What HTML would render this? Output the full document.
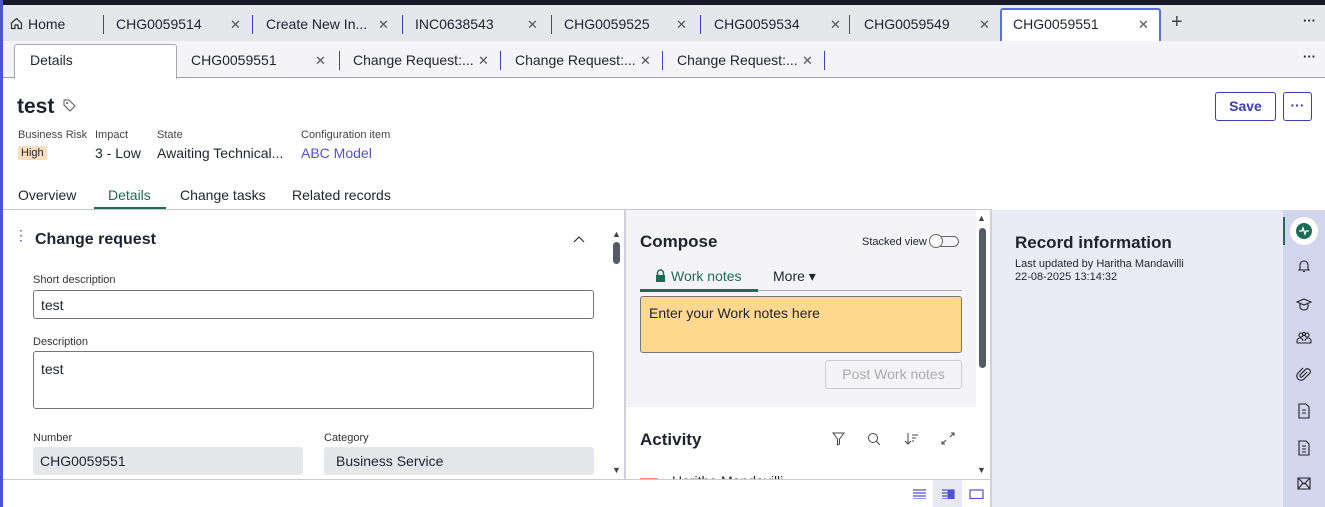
<!DOCTYPE html>
<html><head><meta charset="utf-8"><style>
*{box-sizing:border-box;margin:0;padding:0}
body{width:1325px;height:507px;overflow:hidden;background:#fff;font-family:"Liberation Sans",sans-serif;color:#1f2330;position:relative;font-size:14px}
.a{position:absolute;white-space:nowrap}
.x{color:#555;font-size:13px}
.sep{position:absolute;width:1px;background:#3a44b8}
svg{position:absolute}
</style></head><body>
<div class="a" style="left:0;top:0;width:1325px;height:5px;background:#181a26"></div>
<div class="a" style="left:0;top:0;width:3px;height:507px;background:#4d55c8"></div>
<!-- tab bar 1 -->
<div class="a" style="left:3px;top:5px;width:1322px;height:36px;background:#e6e7eb"></div>
<svg style="left:10px;top:17px" width="13" height="13" viewBox="0 0 13 13"><path d="M1.5 6 L6.5 1.5 L11.5 6 V11.5 H8 V8 H5 V11.5 H1.5 Z" fill="none" stroke="#333" stroke-width="1.2"/></svg>
<div class="a" style="left:28px;top:16px">Home</div>
<div class="sep" style="left:103px;top:15px;height:19px"></div>
<div class="a" style="left:116px;top:16px">CHG0059514</div><div class="a x" style="left:230px;top:17px">✕</div>
<div class="sep" style="left:252px;top:15px;height:19px"></div>
<div class="a" style="left:266px;top:16px">Create New In...</div><div class="a x" style="left:378px;top:17px">✕</div>
<div class="sep" style="left:402px;top:15px;height:19px"></div>
<div class="a" style="left:415px;top:16px">INC0638543</div><div class="a x" style="left:527px;top:17px">✕</div>
<div class="sep" style="left:551px;top:15px;height:19px"></div>
<div class="a" style="left:564px;top:16px">CHG0059525</div><div class="a x" style="left:676px;top:17px">✕</div>
<div class="sep" style="left:700px;top:15px;height:19px"></div>
<div class="a" style="left:714px;top:16px">CHG0059534</div><div class="a x" style="left:830px;top:17px">✕</div>
<div class="sep" style="left:849px;top:15px;height:19px"></div>
<div class="a" style="left:864px;top:16px">CHG0059549</div><div class="a x" style="left:979px;top:17px">✕</div>
<div class="a" style="left:1000px;top:8px;width:161px;height:33px;background:#fff;border:2px solid #5a6ee8;border-bottom:none;border-radius:3px 3px 0 0"></div>
<div class="a" style="left:1013px;top:16px">CHG0059551</div><div class="a x" style="left:1138px;top:17px">✕</div>
<div class="a" style="left:1171px;top:11px;font-size:20px;color:#444">+</div>
<div class="a" style="left:1303px;top:13px;font-weight:bold;font-size:13px">···</div>
<!-- tab bar 2 -->
<div class="a" style="left:3px;top:41px;width:1322px;height:37px;background:#f4f4f6;border-bottom:1px solid #9ea0aa"></div>
<div class="a" style="left:14px;top:44px;width:163px;height:35px;background:#fff;border:1px solid #aaa;border-bottom:none;border-radius:3px 3px 0 0"></div>
<div class="a" style="left:30px;top:52px">Details</div>
<div class="a" style="left:191px;top:52px">CHG0059551</div><div class="a x" style="left:315px;top:53px">✕</div>
<div class="sep" style="left:339px;top:51px;height:19px"></div>
<div class="a" style="left:353px;top:52px">Change Request:...</div><div class="a x" style="left:478px;top:53px">✕</div>
<div class="sep" style="left:500px;top:51px;height:19px"></div>
<div class="a" style="left:515px;top:52px">Change Request:...</div><div class="a x" style="left:640px;top:53px">✕</div>
<div class="sep" style="left:662px;top:51px;height:19px"></div>
<div class="a" style="left:677px;top:52px">Change Request:...</div><div class="a x" style="left:802px;top:53px">✕</div>
<div class="sep" style="left:824px;top:51px;height:19px"></div>
<div class="a" style="left:1303px;top:49px;font-weight:bold;font-size:13px">···</div>
<!-- header -->
<div class="a" style="left:17px;top:95px;font-size:21px;font-weight:bold">test</div>
<svg style="left:63px;top:99px" width="13" height="13" viewBox="0 0 13 13"><path d="M1 1 H6 L12 7 L7 12 L1 6 Z" fill="none" stroke="#555" stroke-width="1"/><circle cx="4" cy="4" r="1" fill="#555"/></svg>
<div class="a" style="left:18px;top:129px;font-size:11px;color:#444">Business Risk</div>
<div class="a" style="left:18px;top:146px;font-size:11px;background:#fbdcbc;padding:1px 3px;border-radius:2px">High</div>
<div class="a" style="left:95px;top:129px;font-size:11px;color:#444">Impact</div>
<div class="a" style="left:95px;top:145px">3 - Low</div>
<div class="a" style="left:157px;top:129px;font-size:11px;color:#444">State</div>
<div class="a" style="left:157px;top:145px">Awaiting Technical...</div>
<div class="a" style="left:301px;top:129px;font-size:11px;color:#444">Configuration item</div>
<div class="a" style="left:301px;top:145px;color:#4f52d0">ABC Model</div>
<div class="a" style="left:1215px;top:92px;width:61px;height:29px;border:1px solid #3b3fb0;border-radius:3px;color:#3b3fb0;font-weight:bold;text-align:center;line-height:27px">Save</div>
<div class="a" style="left:1283px;top:92px;width:29px;height:29px;border:1px solid #3b3fb0;border-radius:3px;color:#3b3fb0;font-weight:bold;text-align:center;line-height:24px">···</div>
<div class="a" style="left:18px;top:187px">Overview</div>
<div class="a" style="left:108px;top:187px;color:#1d6b55">Details</div>
<div class="a" style="left:94px;top:207px;width:72px;height:3px;background:#1d6b55"></div>
<div class="a" style="left:180px;top:187px">Change tasks</div>
<div class="a" style="left:292px;top:187px">Related records</div>
<div class="a" style="left:3px;top:209px;width:989px;height:1px;background:#c8c9d0"></div>
<!-- left panel -->
<div class="a" style="left:14px;top:233px;color:#4f52d0;font-size:14px;line-height:5px">⋮</div>
<div class="a" style="left:35px;top:231px;font-size:16px;font-weight:bold">Change request</div>
<svg style="left:573px;top:235px" width="12" height="8" viewBox="0 0 12 8"><path d="M1 7 L6 2 L11 7" fill="none" stroke="#333" stroke-width="1.2"/></svg>
<div class="a" style="left:33px;top:274px;font-size:11px;color:#333">Short description</div>
<div class="a" style="left:33px;top:290px;width:561px;height:29px;border:1px solid #777;border-radius:3px;padding:6px 7px">test</div>
<div class="a" style="left:33px;top:336px;font-size:11px;color:#333">Description</div>
<div class="a" style="left:33px;top:351px;width:561px;height:58px;border:1px solid #777;border-radius:3px;padding:9px 7px">test</div>
<div class="a" style="left:33px;top:432px;font-size:11px;color:#333">Number</div>
<div class="a" style="left:33px;top:447px;width:270px;height:28px;background:#e6e7eb;border-radius:3px;padding:6px 7px">CHG0059551</div>
<div class="a" style="left:324px;top:432px;font-size:11px;color:#333">Category</div>
<div class="a" style="left:324px;top:447px;width:270px;height:28px;background:#e6e7eb;border-radius:3px;padding:6px 12px">Business Service</div>
<!-- left scrollbar -->
<div class="a" style="left:612px;top:229px;font-size:9px;color:#444">▲</div>
<div class="a" style="left:613px;top:242px;width:7px;height:22px;background:#555a66;border-radius:4px"></div>
<div class="a" style="left:612px;top:465px;font-size:9px;color:#444">▼</div>
<div class="a" style="left:624px;top:210px;width:2px;height:270px;background:#d0d1d8"></div>
<!-- compose -->
<div class="a" style="left:626px;top:210px;width:350px;height:197px;background:#f4f4f6"></div>
<div class="a" style="left:640px;top:232px;font-size:17px;font-weight:bold">Compose</div>
<div class="a" style="left:862px;top:236px;font-size:11px">Stacked view</div>
<div class="a" style="left:930px;top:236px;width:29px;height:11px;border:1px solid #666;border-radius:6px"></div>
<div class="a" style="left:929px;top:234px;width:14px;height:14px;border:1px solid #666;border-radius:50%;background:#fff"></div>
<svg style="left:655px;top:269px" width="11" height="14" viewBox="0 0 11 14"><path d="M2.5 6 V4 a3 3 0 0 1 6 0 V6" fill="none" stroke="#1d6b55" stroke-width="1.5"/><rect x="1" y="6" width="9" height="7" fill="#1d6b55"/></svg>
<div class="a" style="left:671px;top:268px;color:#1d6b55">Work notes</div>
<div class="a" style="left:773px;top:268px">More ▾</div>
<div class="a" style="left:640px;top:290px;width:322px;height:1px;background:#aaa"></div>
<div class="a" style="left:640px;top:289px;width:118px;height:3px;background:#1d6b55"></div>
<div class="a" style="left:640px;top:296px;width:322px;height:57px;background:#fdd88e;border:1px solid #777;border-radius:3px;padding:8px 8px">Enter your Work notes here</div>
<div class="a" style="left:825px;top:360px;width:137px;height:29px;border:1px solid #ccc;border-radius:3px;color:#aaa;text-align:center;line-height:27px">Post Work notes</div>
<div class="a" style="left:640px;top:430px;font-size:17px;font-weight:bold">Activity</div>
<svg style="left:832px;top:432px" width="124" height="14" viewBox="0 0 124 14" fill="none" stroke="#444" stroke-width="1"><path d="M1 1 H12 L7.5 7 V12 L5.5 13 V7 Z"/><circle cx="41" cy="6" r="4.5"/><path d="M44 9 L48 13"/><path d="M76 1 V12 M73 9 L76 12 L79 9 M80 3 H86 M80 6 H84 M80 9 H82"/><path d="M110 12 L114 8 M110 9 V12 H113 M122 1 L118 5 M119 1 H122 V4"/></svg>
<div class="a" style="left:640px;top:478px;width:18px;height:2px;background:#f08a70"></div>
<div class="a" style="left:672px;top:473px;font-size:14px;height:7px;overflow:hidden">Haritha Mandavilli</div>
<!-- mid scrollbar -->
<div class="a" style="left:977px;top:213px;font-size:9px;color:#444">▲</div>
<div class="a" style="left:979px;top:228px;width:7px;height:140px;background:#555a66;border-radius:4px"></div>
<div class="a" style="left:977px;top:465px;font-size:9px;color:#444">▼</div>
<div class="a" style="left:990px;top:210px;width:2px;height:297px;background:#d0d1d8"></div>
<!-- bottom bar -->
<div class="a" style="left:3px;top:479px;width:987px;height:1px;background:#ccc"></div>
<div class="a" style="left:933px;top:480px;width:29px;height:27px;background:#e8e8f2"></div>
<svg style="left:912px;top:489px" width="72" height="10" viewBox="0 0 72 10" fill="none" stroke="#4f52d0" stroke-width="1.2"><path d="M1 1 H14 M1 4 H14 M1 7 H14 M1 10 H14"/><path d="M30 1 H35 M30 4 H35 M30 7 H35 M30 10 H35"/><rect x="36" y="1" width="6" height="9" fill="#4f52d0"/><rect x="58" y="1" width="13" height="8.5"/></svg>
<!-- right panel -->
<div class="a" style="left:992px;top:210px;width:291px;height:297px;background:#ebebf5"></div>
<div class="a" style="left:1015px;top:233px;font-size:17px;font-weight:bold">Record information</div>
<div class="a" style="left:1015px;top:258px;font-size:11px">Last updated by Haritha Mandavilli</div>
<div class="a" style="left:1015px;top:271px;font-size:11px">22-08-2025 13:14:32</div>
<div class="a" style="left:1283px;top:210px;width:42px;height:297px;background:#d3d4ee"></div>
<div class="a" style="left:1283px;top:217px;width:2px;height:28px;background:#1d6b55"></div>
<div class="a" style="left:1290px;top:217px;width:28px;height:28px;background:#fff;border-radius:50%"></div>
<div class="a" style="left:1296px;top:223px;width:16px;height:16px;background:#1d6b55;border-radius:50%"></div>
<svg style="left:1297px;top:224px" width="14" height="14" viewBox="0 0 14 14"><path d="M2 7 H5 L6 4 L8 10 L9 7 H12" fill="none" stroke="#fff" stroke-width="1.3"/></svg>
<svg style="left:1296px;top:258px" width="16" height="240" viewBox="0 0 16 240" fill="none" stroke="#222" stroke-width="1.1">
<path d="M4 11 V7 a4 4 0 0 1 8 0 V11 L13 12 H3 Z M7 13.5 H9"/>
<path d="M1 44 L8 41 L15 44 L8 47 Z M4 46 V49 a4 3 0 0 0 8 0 V46"/>
<circle cx="5" cy="77" r="2"/><circle cx="11" cy="77" r="2"/><circle cx="8" cy="76" r="1.6"/><path d="M1 85 V83 a3 3 0 0 1 6 0 M9 83 a3 3 0 0 1 6 0 V85 M1 85 H15"/>
<path d="M11 114 L6 119 a1.5 1.5 0 0 1 -2 -2 L10 111 a3 3 0 0 1 4 4 L8 121 a4 4 0 0 1 -6 -6 L7 110"/>
<path d="M3 146 H10 L13 149 V160 H3 Z M6 152 H10 M6 155 H10"/>
<path d="M3 183 H10 L13 186 V197 H3 Z M6 188 H10 M6 191 H10 M6 194 H10"/>
<path d="M2 220 H14 V231 H2 Z M2 220 L8 226 L14 220 M2 231 L7 225 M14 231 L9 225"/>
</svg>
</body></html>
